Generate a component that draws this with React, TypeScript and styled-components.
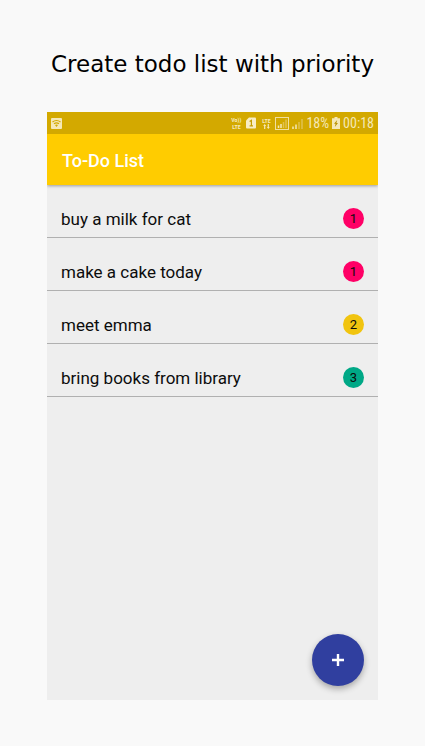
import React from "react";
import styled, { createGlobalStyle } from "styled-components";

const GlobalStyle = createGlobalStyle`
  * { box-sizing: border-box; }
  body {
    margin: 0;
    background: #f9f9f9;
    font-family: Roboto, "Liberation Sans", sans-serif;
    color: #0c0c0c;
  }
`;

const Page = styled.main`
  min-height: 100vh;
  display: flex;
  flex-direction: column;
  padding: 0 47px 46px;
`;

const Headline = styled.h1`
  margin: 48px -40px 32px;
  font: 400 23px/32px Verdana, "DejaVu Sans", sans-serif;
  color: #000;
  text-align: center;
`;

const Phone = styled.section`
  flex: 1;
  display: flex;
  flex-direction: column;
  background: #eee;
`;

const StatusBar = styled.div`
  display: flex;
  align-items: center;
  justify-content: space-between;
  height: 22px;
  padding: 0 4px;
  background: #d3a900;
  color: #f5e8b8;
`;

const StatusGroup = styled.div`
  display: flex;
  align-items: center;
  svg { display: block; }
`;

const Indicators = styled.div`
  display: flex;
  align-items: center;
  gap: 3px;
  margin-right: 3px;
`;

const Network = styled.span`
  display: flex;
  flex-direction: column;
  align-items: center;
  width: 12px;
  font: 700 6px/7px "Roboto Condensed", Roboto, sans-serif;
`;

const StatusText = styled.span`
  font: 400 14px/22px "Roboto Condensed", "Liberation Sans Narrow", Roboto, sans-serif;
`;

const SimSlot = styled.span`
  margin: 0 1px;
`;

const Battery = styled.svg`
  margin: 0 3px;
`;

const Toolbar = styled.header`
  display: flex;
  align-items: center;
  height: 51px;
  padding: 2px 15px 0;
  background: #fc0;
  box-shadow: 0 1px 3px rgba(0, 0, 0, 0.35);
  clip-path: inset(0 0 -6px 0);
  z-index: 1;
`;

const AppTitle = styled.h2`
  margin: 0;
  font-size: 18px;
  line-height: 24px;
  font-weight: 500;
  color: #fff;
`;

const List = styled.ul`
  list-style: none;
  margin: 0;
  padding: 0;
`;

const Row = styled.li`
  display: flex;
  align-items: flex-end;
  justify-content: space-between;
  height: 53px;
  padding: 0 14px 8px;
  border-bottom: 1px solid #b0b0b0;
`;

const Task = styled.span`
  font-size: 17px;
  line-height: 20px;
`;

const priorityColors: Record<number, string> = {
  1: "#ff0066",
  2: "#f1c40f",
  3: "#00a886",
};

const Priority = styled.span<{ $level: number }>`
  width: 21px;
  height: 21px;
  border-radius: 50%;
  background: ${(p) => priorityColors[p.$level]};
  font-size: 13px;
  line-height: 22px;
  text-align: center;
`;

const AddButton = styled.button`
  display: flex;
  align-items: center;
  justify-content: center;
  width: 52px;
  height: 52px;
  margin: auto 14px 14px auto;
  padding: 0;
  border: 0;
  border-radius: 50%;
  background: #303f9f;
  box-shadow: 0 3px 6px rgba(0, 0, 0, 0.3);
  cursor: pointer;
`;

const tasks = [
  { text: "buy a milk for cat", level: 1 },
  { text: "make a cake today", level: 1 },
  { text: "meet emma", level: 2 },
  { text: "bring books from library", level: 3 },
];

const WifiIcon = () => (
  <svg width="11" height="11" viewBox="0 0 11 11" aria-hidden="true">
    <rect width="11" height="11" rx="1" fill="#f5e8b8" />
    <path d="M1.5 4Q5.5 1 9.5 4M3 5.8Q5.5 3.8 8 5.8" fill="none" stroke="#d3a900" strokeWidth="1.2" />
    <path d="M4 7Q5.5 6 7 7L5.5 9Z" fill="#d3a900" />
  </svg>
);

const SimIcon = () => (
  <svg width="10" height="12" viewBox="0 0 10 12" aria-hidden="true">
    <path d="M3 0.5H9Q10 0.5 10 1.5V10.5Q10 11.5 9 11.5H1Q0 11.5 0 10.5V3.5Z" fill="#f8edc4" />
    <path d="M3.6 4.6L5.4 3.4V9M3.6 8.8H7" fill="none" stroke="#c49d00" strokeWidth="1.2" />
  </svg>
);

const BoxedSignalIcon = () => (
  <svg width="14" height="13" viewBox="0 0 14 13" aria-hidden="true">
    <rect x="0.5" y="0.5" width="13" height="12" fill="none" stroke="#f0dfa0" />
    <path d="M3.5 8.5V11M6 7V11" stroke="#f5e8b8" strokeWidth="1.5" />
    <path d="M8.5 5V11M11 2.5V11" stroke="#e0c150" strokeWidth="1.5" />
  </svg>
);

const SignalIcon = () => (
  <svg width="11" height="11" viewBox="0 0 11 11" aria-hidden="true">
    <path d="M1 8.5V11M4 6.5V11" stroke="#f5e8b8" strokeWidth="1.5" />
    <path d="M7 4V11M10 1V11" stroke="#e0c150" strokeWidth="1.5" />
  </svg>
);

const DataArrows = () => (
  <svg width="7" height="5" viewBox="0 0 7 5" aria-hidden="true">
    <path d="M0.2 2L1.7 0L3.2 2H2.3V5H1.1V2ZM3.8 3L5.3 5L6.8 3H5.9V0H4.7V3Z" fill="currentColor" />
  </svg>
);

export default function App() {
  return (
    <>
      <GlobalStyle />
      <Page>
        <Headline>Create todo list with priority</Headline>
        <Phone>
          <StatusBar>
            <StatusGroup>
              <WifiIcon />
            </StatusGroup>
            <StatusGroup>
              <Indicators>
                <Network>
                  <span>Vo))</span>
                  <span>LTE</span>
                </Network>
                <SimSlot>
                  <SimIcon />
                </SimSlot>
                <Network>
                  <span>LTE</span>
                  <DataArrows />
                </Network>
                <BoxedSignalIcon />
                <SignalIcon />
              </Indicators>
              <StatusText>18%</StatusText>
              <Battery width="8" height="12" viewBox="0 0 8 12" aria-hidden="true">
                <path d="M2.5 0H5.5V1.2H8V12H0V1.2H2.5Z" fill="#f5e8b8" />
                <path d="M5.2 3L2 6.7H3.6L2.8 10L6 5.9H4.4Z" fill="#b89200" />
              </Battery>
              <StatusText>00:18</StatusText>
            </StatusGroup>
          </StatusBar>
          <Toolbar>
            <AppTitle>To-Do List</AppTitle>
          </Toolbar>
          <List>
            {tasks.map((task) => (
              <Row key={task.text}>
                <Task>{task.text}</Task>
                <Priority $level={task.level}>{task.level}</Priority>
              </Row>
            ))}
          </List>
          <AddButton type="button" aria-label="Add task">
            <svg width="12" height="12" viewBox="0 0 12 12" aria-hidden="true">
              <path d="M6 0V12M0 6H12" stroke="#fff" strokeWidth="2.4" />
            </svg>
          </AddButton>
        </Phone>
      </Page>
    </>
  );
}
